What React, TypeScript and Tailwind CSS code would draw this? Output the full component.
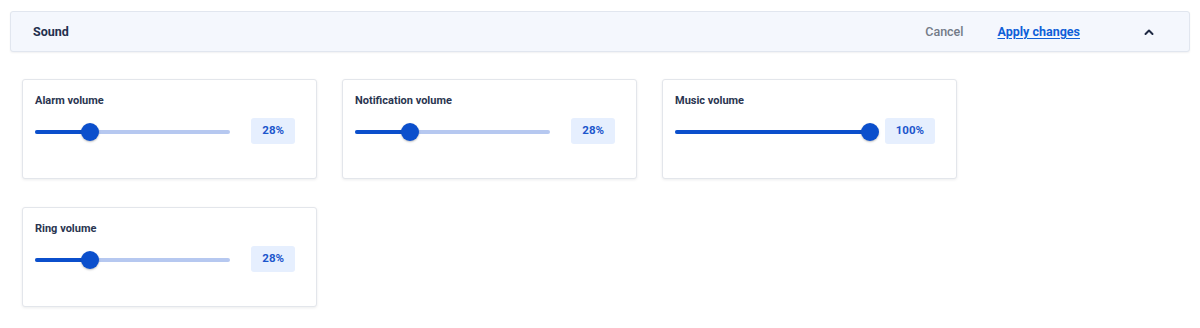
const volumes = [
  { label: "Alarm volume", value: 28 },
  { label: "Notification volume", value: 28 },
  { label: "Music volume", value: 100 },
  { label: "Ring volume", value: 28 },
];

function VolumeSlider({ value }: { value: number }) {
  return (
    <div className="relative mt-[5px] h-[18px] w-[195px] flex items-center">
      <div className="h-[4px] w-full rounded-full bg-[#b6c8f0]"></div>
      <div
        className="absolute left-0 h-[4px] rounded-full bg-[#0b4fcc]"
        style={{ width: `${value}%` }}
      ></div>
      <div
        className="absolute top-0 h-[18px] w-[18px] -ml-[9px] rounded-full bg-[#0b4fcc] shadow-[0_1px_2px_rgba(0,0,0,0.25)]"
        style={{ left: `${value}%` }}
      ></div>
    </div>
  );
}

export default function App() {
  return (
    <div
      className="min-h-screen bg-white px-[10px] pt-[11px] text-[#1f2a44]"
      style={{ fontFamily: "Roboto, 'Noto Sans', sans-serif" }}
    >
      <div className="flex h-[41px] w-[1180px] items-center justify-between rounded-[3px] border border-[#e1e6ef] bg-[#f4f7fd] pl-[22px] pr-[34px] shadow-[0_1px_2px_rgba(16,24,40,0.06)]">
        <span className="pt-[1px] text-[12.5px] font-bold text-[#23304d]">Sound</span>
        <div className="flex items-center pt-[1px]">
          <button className="text-[12.5px] font-medium text-[#737b88]">Cancel</button>
          <button className="ml-[34px] text-[12.5px] font-bold text-[#0f5fd8] underline underline-offset-2">
            Apply changes
          </button>
          <svg
            className="ml-[63px]"
            width="12"
            height="12"
            viewBox="0 0 12 12"
            fill="none"
          >
            <path
              d="M2.5 8L6 4.5L9.5 8"
              stroke="#1f2a44"
              strokeWidth="2"
              strokeLinecap="round"
              strokeLinejoin="round"
            />
          </svg>
        </div>
      </div>

      <div className="mt-[27px] ml-[12px] grid grid-cols-[295px_295px_295px] gap-x-[25px] gap-y-[28px]">
        {volumes.map((v) => (
          <div
            key={v.label}
            className="h-[100px] rounded-[3px] border border-[#e3e6eb] bg-white pl-[12px] pr-[21px] pt-[14px] shadow-[0_1px_3px_rgba(16,24,40,0.08)]"
          >
            <div className="text-[11px] font-bold leading-[14px] text-[#2a3550]">{v.label}</div>
            <div className="mt-[10px] flex items-start justify-between">
              <VolumeSlider value={v.value} />
              <span className="flex h-[26px] items-center rounded-[3px] bg-[#e6effe] px-[11px] text-[11.5px] font-bold text-[#1c56cc]">
                {v.value}%
              </span>
            </div>
          </div>
        ))}
      </div>
    </div>
  );
}
